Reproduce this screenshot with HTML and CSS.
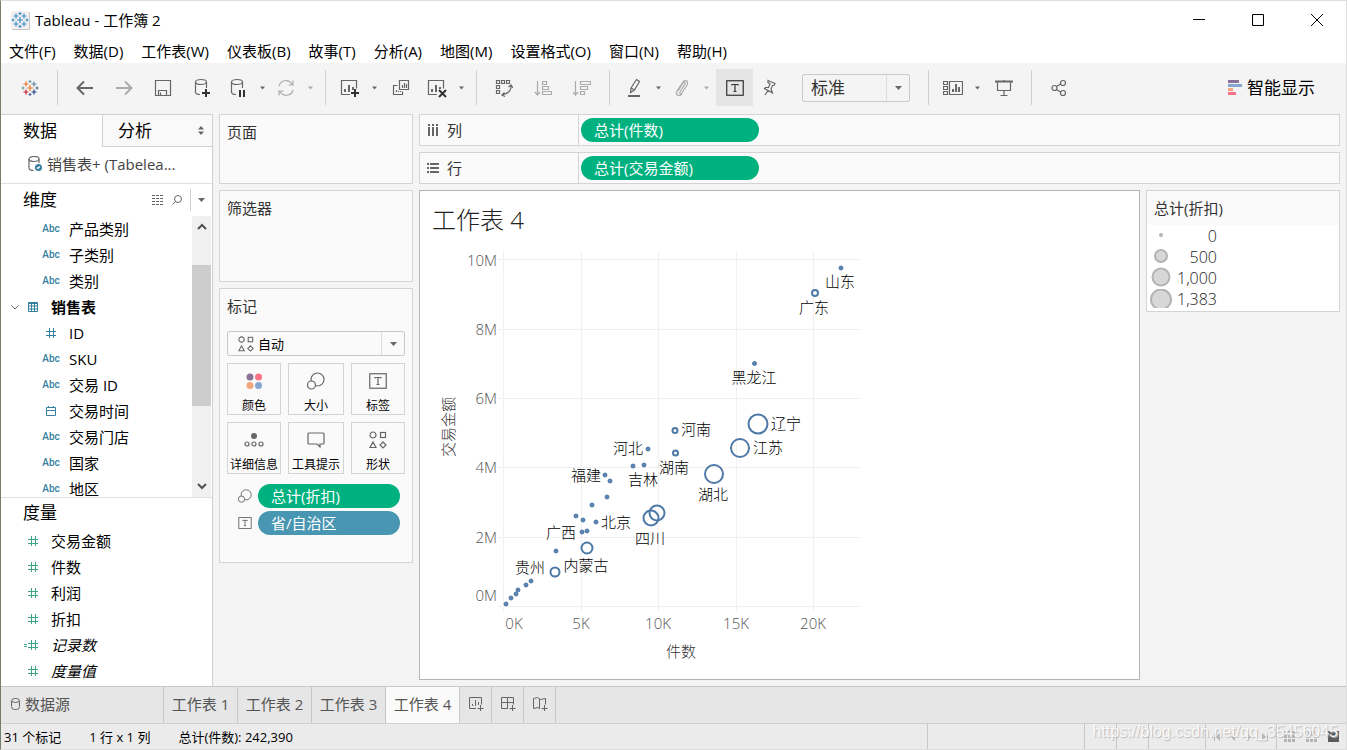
FILE: index.html
```
<!DOCTYPE html>
<html lang="zh-CN">
<head>
    <meta charset="UTF-8">
    <meta name="viewport" content="width=device-width, initial-scale=1.0">
    <title>Tableau - 工作簿 2</title>
    <link rel="stylesheet" href="styles.css">
</head>
<body>
    <svg class="sprite" aria-hidden="true">
        <symbol id="logo-parts" viewBox="0 0 18 18">
            <path d="M5 2.5v5M2.5 5h5M13 2.5v5M10.5 5h5M5 10.5v5M2.5 13h5M13 10.5v5M10.5 13h5M9 6v6M6 9h6M9 1v3M7.5 2.5h3M9 14v3M7.5 15.5h3M2 7.5v3M.5 9h3M16 7.5v3M14.5 9h3"/>
        </symbol>
        <symbol id="caret" viewBox="0 0 7 4"><path d="M0 0h7L3.5 4z"/></symbol>
        <symbol id="hash" viewBox="0 0 10 10"><path d="M3.5 0v10M7.5 0v10M0 3.5h10M0 7.5h10"/></symbol>
        <symbol id="size" viewBox="0 0 18 18"><circle cx="10.5" cy="7.5" r="6.5"/><circle cx="4.5" cy="13" r="4" class="paper"/></symbol>
        <symbol id="text" viewBox="0 0 18 16"><rect x=".75" y=".75" width="16.5" height="14.5"/><path d="M6 5.5V4.5h6v1M9 4.5v7M7.5 11.5h3"/></symbol>
        <symbol id="shapes" viewBox="0 0 18 18">
            <circle cx="4" cy="4" r="3"/><rect x="11.5" y="1.5" width="5" height="5"/><path d="M4 11l3 5.5H1zM14 11l3 3-3 3-3-3z"/>
        </symbol>
    </svg>

    <div class="window">
        <header class="title-bar">
            <svg class="app-icon" viewBox="0 0 18 18"><use href="#logo-parts"/></svg>
            <h1>Tableau - 工作簿 2</h1>
            <div class="window-buttons">
                <button aria-label="最小化"><svg width="12" height="12" viewBox="0 0 12 12"><path d="M0 5.5h12"/></svg></button>
                <button aria-label="最大化"><svg width="12" height="12" viewBox="0 0 12 12"><path d="M.5.5h11v11H.5z"/></svg></button>
                <button aria-label="关闭"><svg width="12" height="12" viewBox="0 0 12 12"><path d="M0 0l12 12M12 0L0 12"/></svg></button>
            </div>
        </header>

        <nav class="menu">
            <button>文件(F)</button>
            <button>数据(D)</button>
            <button>工作表(W)</button>
            <button>仪表板(B)</button>
            <button>故事(T)</button>
            <button>分析(A)</button>
            <button>地图(M)</button>
            <button>设置格式(O)</button>
            <button>窗口(N)</button>
            <button>帮助(H)</button>
        </nav>

        <div class="toolbar">
            <button class="tool" aria-label="开始页">
                <svg width="18" height="18" viewBox="0 0 18 18">
                    <path stroke="#e8762c" d="M9 6v6M6 9h6M5 2.5v5M2.5 5h5"/>
                    <path stroke="#5b879b" d="M13 2.5v5M10.5 5h5"/>
                    <path stroke="#c72035" d="M5 10.5v5M2.5 13h5"/>
                    <path stroke="#1f457e" d="M13 10.5v5M10.5 13h5"/>
                    <path stroke="#7199a6" d="M9 1v3M7.5 2.5h3M2 7.5v3M.5 9h3"/>
                    <path stroke="#5c6692" d="M9 14v3M7.5 15.5h3M16 7.5v3M14.5 9h3"/>
                </svg>
            </button>
            <span class="divider"></span>
            <button class="tool" aria-label="撤消"><svg width="18" height="16" viewBox="0 0 18 16"><path stroke-width="2" d="M17 8H2M8 1.5L1.5 8 8 14.5"/></svg></button>
            <button class="tool" aria-label="重做" disabled><svg width="18" height="16" viewBox="0 0 18 16"><path stroke-width="2" d="M1 8h15M10 1.5L16.5 8 10 14.5"/></svg></button>
            <button class="tool" aria-label="保存"><svg width="18" height="18" viewBox="0 0 18 18"><path d="M1.5 1.5h15v15h-15zM4.5 16.5v-5h8v5"/><path d="M6.5 13.5v3"/></svg></button>
            <button class="tool" aria-label="新建数据源"><svg width="18" height="20" viewBox="0 0 18 20"><ellipse cx="8" cy="4" rx="5.5" ry="2.5"/><path d="M2.5 4v10c0 1.5 2 2.5 4.5 2.5M13.5 4v6"/><path class="bold" d="M13 11v8M9 15h8"/></svg></button>
            <button class="tool split" aria-label="暂停自动更新"><svg width="18" height="20" viewBox="0 0 18 20"><ellipse cx="8" cy="4" rx="5.5" ry="2.5"/><path d="M2.5 4v10c0 1.5 2 2.5 4.5 2.5M13.5 4v6"/><path class="bold" d="M11 12v7M15 12v7"/></svg></button>
            <button class="drop" aria-label="自动更新选项"><svg><use href="#caret"/></svg></button>
            <button class="tool split" aria-label="运行更新" disabled><svg width="18" height="18" viewBox="0 0 18 18"><path d="M2 7a7 7 0 0 1 13-1.5M16 11a7 7 0 0 1-13 1.5M16 1.5v4.5h-4.5M2 16.5V12h4.5"/></svg></button>
            <button class="drop" aria-label="更新选项" disabled><svg><use href="#caret"/></svg></button>
            <span class="divider"></span>
            <button class="tool split" aria-label="新建工作表"><svg width="20" height="20" viewBox="0 0 20 20"><path d="M10 16.5H1.5v-14h15v8"/><path stroke-width="2" d="M5 14v-3M9 14V7M13 12V9"/><path class="bold" d="M15 11v8M11 15h8"/></svg></button>
            <button class="drop" aria-label="新建选项"><svg><use href="#caret"/></svg></button>
            <button class="tool" aria-label="复制工作表"><svg width="18" height="18" viewBox="0 0 18 18"><path d="M7.5 1.5h9v9h-9zM5.5 6.5h-4v9h9v-3M10.5 9V6M12.5 9V4M14.5 9V5M4.5 13v-2M6.5 13v-1M8.5 13v-1"/></svg></button>
            <button class="tool split" aria-label="清除工作表"><svg width="20" height="20" viewBox="0 0 20 20"><path d="M10 16.5H1.5v-14h15v8"/><path stroke-width="2" d="M5 14v-3M9 14V7M13 11V9"/><path class="bold" d="M12 12l7 7M19 12l-7 7"/></svg></button>
            <button class="drop" aria-label="清除选项"><svg><use href="#caret"/></svg></button>
            <span class="divider"></span>
            <button class="tool" aria-label="交换行和列"><svg width="18" height="18" viewBox="0 0 18 18"><path d="M1.5 1.5h3v3h-3zM6.5 1.5h3v3h-3zM11.5 1.5h3v3h-3zM1.5 6.5h3v3h-3zM1.5 11.5h3v3h-3z"/><path d="M16 6c1 5-3 9-9 10M13.5 8L16 6l2 3M9.5 13.5L7 16l3 1.5"/></svg></button>
            <button class="tool" aria-label="升序" disabled><svg width="18" height="16" viewBox="0 0 18 16"><path d="M3.5 1v14M1 12l2.5 3L6 12M8.5 1.5h4v3h-4zM8.5 6.5h6v3h-6zM8.5 11.5h9v3h-9z"/></svg></button>
            <button class="tool" aria-label="降序" disabled><svg width="18" height="16" viewBox="0 0 18 16"><path d="M2.5 1v14M0 12l2.5 3L5 12M7.5 1.5h10v3h-10zM7.5 6.5h7v3h-7zM7.5 11.5h4v3h-4z"/></svg></button>
            <span class="divider"></span>
            <button class="tool split" aria-label="突出显示"><svg width="14" height="20" viewBox="0 0 14 20"><path d="M4 10L9.5 1.5l3 2L7.5 12 3.5 14.5zM4 10l3.5 2"/><path stroke-width="2" d="M1 18h12"/></svg></button>
            <button class="drop" aria-label="突出显示选项"><svg><use href="#caret"/></svg></button>
            <button class="tool split" aria-label="组成员" disabled><svg width="14" height="18" viewBox="0 0 14 18"><path d="M10 5L5 13c-1 1.5 1 2.5 2 1L12 6c2-4-2-6-4-3L2 12c-2 4 2 6 5 3M10 5c1-1.5-1-2-2-1L3 12"/></svg></button>
            <button class="drop" aria-label="组选项" disabled><svg><use href="#caret"/></svg></button>
            <button class="tool pressed" aria-label="显示标记标签" aria-pressed="true"><svg width="18" height="16"><use href="#text"/></svg></button>
            <button class="tool split" aria-label="固定轴"><svg width="16" height="18" viewBox="0 0 16 18"><path d="M6 1.5l7 3-1 2h-1.5L9 10l1.500 4L2.500 9.500l1-1H6.500L8 5 6 3.500zM6 11.500L3 16"/></svg></button>
            <label class="picker fit">
                <select aria-label="适合"><option>标准</option><option>适合宽度</option></select>
                <span class="picker-arrow"><svg><use href="#caret"/></svg></span>
            </label>
            <span class="divider wide"></span>
            <button class="tool split" aria-label="显示/隐藏卡"><svg width="20" height="16" viewBox="0 0 20 16"><path d="M.5 1.5h4v3h-4zM.5 6.5h4v3h-4zM.5 11.5h4v3h-4zM6.5 1.5h13v13h-13z"/><path stroke-width="2" d="M10 12V9M13 12V4M16 12V7"/></svg></button>
            <button class="drop" aria-label="卡选项"><svg><use href="#caret"/></svg></button>
            <button class="tool" aria-label="演示模式"><svg width="18" height="18" viewBox="0 0 18 18"><path stroke-width="2" d="M0 2.500h18"/><path d="M2.5 3v8.500h13V3M9 1v1M9 12v4M5.500 16.500h7"/></svg></button>
            <span class="divider"></span>
            <button class="tool" aria-label="共享"><svg width="16" height="18" viewBox="0 0 16 18"><path d="M5.5 7.5L9.5 5M5.5 10.5L9.5 13"/><circle cx="3.5" cy="9" r="2.5"/><circle cx="12" cy="4" r="2.5"/><circle cx="12" cy="14" r="2.5"/></svg></button>
            <button class="show-me">
                <svg width="14" height="16" viewBox="0 0 14 16"><path fill="#8a7199" d="M0 0h11v3H0z"/><path fill="#85a7cf" d="M0 4h14v3H0z"/><path fill="#f4a67d" d="M0 8h5v3H0z"/><path fill="#fb7185" d="M0 12h8v3H0z"/></svg>
                智能显示
            </button>
        </div>

        <main class="workspace">
            <aside class="data-pane">
                <div class="pane-tabs">
                    <button class="pane-tab active">数据</button>
                    <button class="pane-tab">分析
                        <svg width="6" height="9" viewBox="0 0 6 9"><path d="M0 3.5L3 0l3 3.5zM0 5.5L3 9l3-3.5z"/></svg>
                    </button>
                </div>
                <div class="data-source">
                    <svg width="15" height="16" viewBox="0 0 15 16"><ellipse cx="6" cy="3" rx="5" ry="2.5"/><path d="M1 3v9c0 1.5 2 2.5 4.5 2.5M11 3v4"/><circle cx="10.5" cy="11.5" r="3.5" fill="#35809f" stroke="none"/><path stroke="#fff" d="M9 11.5l1 1 2-2"/></svg>
                    <span>销售表+ (Tabelea...</span>
                </div>
                <div class="pane-heading">
                    <h2>维度</h2>
                    <button aria-label="查看数据"><svg width="12" height="10" viewBox="0 0 12 10"><path stroke-dasharray="3 1" d="M0 .5h12M0 3.5h12M0 6.5h12M0 9.5h12"/></svg></button>
                    <button aria-label="查找字段"><svg width="10" height="10" viewBox="0 0 10 10"><circle cx="6" cy="4" r="3.5"/><path d="M3.5 6.5L.5 9.5"/></svg></button>
                    <button class="pane-menu" aria-label="维度菜单"><svg><use href="#caret"/></svg></button>
                </div>
                <div class="dimensions">
                    <ul class="fields">
                        <li class="child"><span class="abc">Abc</span>产品类别</li>
                        <li class="child"><span class="abc">Abc</span>子类别</li>
                        <li class="child"><span class="abc">Abc</span>类别</li>
                        <li class="folder">
                            <svg class="chevron" width="8" height="5" viewBox="0 0 8 5"><path d="M.5.5L4 4 7.5.5"/></svg>
                            <svg width="10" height="10" viewBox="0 0 10 10"><path d="M.5.5h9v9h-9zM0 1.5h10M0 4h10M0 7h10M3.5 1v9M6.5 1v9"/></svg>
                            <strong>销售表</strong>
                        </li>
                        <li class="child"><span class="abc"><svg width="10" height="10"><use href="#hash"/></svg></span>ID</li>
                        <li class="child"><span class="abc">Abc</span>SKU</li>
                        <li class="child"><span class="abc">Abc</span>交易 ID</li>
                        <li class="child"><span class="abc"><svg width="10" height="10" viewBox="0 0 10 10"><path d="M.5 1.5h9v8h-9zM0 4.5h10M2.5 0v2M7.5 0v2"/></svg></span>交易时间</li>
                        <li class="child"><span class="abc">Abc</span>交易门店</li>
                        <li class="child"><span class="abc">Abc</span>国家</li>
                        <li class="child"><span class="abc">Abc</span>地区</li>
                    </ul>
                    <div class="scrollbar">
                        <svg width="10" height="7" viewBox="0 0 10 7"><path d="M1 6l4-4 4 4"/></svg>
                        <div class="scroll-track"><div class="scroll-thumb"></div></div>
                        <svg width="10" height="7" viewBox="0 0 10 7"><path d="M1 1l4 4 4-4"/></svg>
                    </div>
                </div>
                <div class="measures">
                    <h2>度量</h2>
                    <ul class="fields">
                        <li><svg width="10" height="10"><use href="#hash"/></svg>交易金额</li>
                        <li><svg width="10" height="10"><use href="#hash"/></svg>件数</li>
                        <li><svg width="10" height="10"><use href="#hash"/></svg>利润</li>
                        <li><svg width="10" height="10"><use href="#hash"/></svg>折扣</li>
                        <li class="computed"><svg width="14" height="10" viewBox="0 0 14 10"><path d="M0 4.5h3M0 6.5h3M7.5 0v10M11.5 0v10M4 3.5h10M4 7.5h10"/></svg><em>记录数</em></li>
                        <li><svg width="10" height="10"><use href="#hash"/></svg><em>度量值</em></li>
                    </ul>
                </div>
            </aside>

            <div class="cards">
                <section class="card pages"><h3>页面</h3></section>
                <section class="card filters"><h3>筛选器</h3></section>
                <section class="card marks">
                    <h3>标记</h3>
                    <label class="picker mark-type">
                        <svg width="16" height="16"><use href="#shapes"/></svg>
                        <select aria-label="标记类型"><option>自动</option><option>形状</option></select>
                        <span class="picker-arrow"><svg><use href="#caret"/></svg></span>
                    </label>
                    <div class="mark-buttons">
                        <button><svg class="dots" width="18" height="18" viewBox="0 0 18 18"><circle cx="5" cy="5" r="3.5" fill="#8a7199"/><circle cx="13.5" cy="5" r="3.5" fill="#fb7185"/><circle cx="5" cy="13.5" r="3.5" fill="#f4a67d"/><circle cx="13.5" cy="13.5" r="3.5" fill="#85a7cf"/></svg>颜色</button>
                        <button><svg width="18" height="18"><use href="#size"/></svg>大小</button>
                        <button><svg width="18" height="18"><use href="#text"/></svg>标签</button>
                        <button><svg width="20" height="18" viewBox="0 0 20 18"><circle cx="10" cy="5" r="3" fill="#666" stroke="none"/><circle cx="3" cy="13" r="2"/><circle cx="10" cy="13" r="2"/><circle cx="17" cy="13" r="2"/></svg>详细信息</button>
                        <button><svg width="18" height="18" viewBox="0 0 18 18"><path d="M2 2h14q1 0 1 1v9q0 1-1 1h-3v3l-3-3H2q-1 0-1-1V3q0-1 1-1z"/></svg>工具提示</button>
                        <button><svg width="18" height="18"><use href="#shapes"/></svg>形状</button>
                    </div>
                    <div class="mark-fields">
                        <svg width="14" height="14"><use href="#size"/></svg>
                        <button class="pill green">总计(折扣)</button>
                        <svg width="14" height="12"><use href="#text"/></svg>
                        <button class="pill blue">省/自治区</button>
                    </div>
                </section>
            </div>

            <div class="canvas">
                <div class="shelf">
                    <div class="shelf-name"><svg width="12" height="12" viewBox="0 0 12 12"><path stroke-width="2" d="M2 0v2M6 0v2M10 0v2M2 3v9M6 3v9M10 3v9"/></svg>列</div>
                    <button class="pill green">总计(件数)</button>
                </div>
                <div class="shelf">
                    <div class="shelf-name"><svg width="12" height="12" viewBox="0 0 12 12"><path stroke-width="2" d="M0 2h2M0 6h2M0 10h2M3 2h9M3 6h9M3 10h9"/></svg>行</div>
                    <button class="pill green">总计(交易金额)</button>
                </div>
                <div class="view-row">
                    <section class="view">
                        <h2>工作表 4</h2>
                        <svg class="chart" width="450" height="430" viewBox="420 240 450 430" role="img" aria-label="交易金额 / 件数">
                            <g class="grid">
                                <path d="M498 259.5h362M498 329.5h362M498 398.5h362M498 467.5h362M498 537.5h362M498 606.5h362"/>
                                <path d="M503.5 251v360M581.5 251v360M658.5 251v360M736.5 251v360M813.5 251v360"/>
                            </g>
                            <g class="ticks y-ticks">
                                <text x="497" y="266">10M</text>
                                <text x="497" y="335">8M</text>
                                <text x="497" y="404">6M</text>
                                <text x="497" y="473">4M</text>
                                <text x="497" y="543">2M</text>
                                <text x="497" y="601">0M</text>
                            </g>
                            <g class="ticks">
                                <text x="514" y="629">0K</text>
                                <text x="581" y="629">5K</text>
                                <text x="658" y="629">10K</text>
                                <text x="736" y="629">15K</text>
                                <text x="813" y="629">20K</text>
                            </g>
                            <g class="axis-titles">
                                <text x="681" y="657">件数</text>
                                <text transform="translate(454 427) rotate(-90)">交易金额</text>
                            </g>
                            <g class="points">
                                <circle cx="506" cy="604" r="2"/>
                                <circle cx="511" cy="598" r="2"/>
                                <circle cx="516" cy="594" r="2"/>
                                <circle cx="518" cy="590" r="2"/>
                                <circle cx="526" cy="585" r="2"/>
                                <circle cx="531" cy="581" r="2"/>
                                <circle cx="556" cy="551" r="2"/>
                                <circle cx="576" cy="516" r="2"/>
                                <circle cx="583" cy="520" r="2"/>
                                <circle cx="592" cy="505" r="2"/>
                                <circle cx="607" cy="497" r="2"/>
                                <circle cx="596" cy="522" r="2"/>
                                <circle cx="587" cy="531" r="2"/>
                                <circle cx="582" cy="532" r="2"/>
                                <circle cx="605" cy="475" r="2"/>
                                <circle cx="610" cy="481" r="2"/>
                                <circle cx="633" cy="466" r="2"/>
                                <circle cx="644" cy="465" r="2"/>
                                <circle cx="648" cy="449" r="2"/>
                                <circle cx="754.5" cy="363.5" r="2"/>
                                <circle cx="841" cy="268" r="2"/>
                            </g>
                            <g class="rings">
                                <circle cx="675" cy="430.5" r="2.5"/>
                                <circle cx="675.5" cy="453" r="2.5"/>
                                <circle cx="815" cy="293" r="3"/>
                                <circle cx="555" cy="572" r="4.5"/>
                                <circle cx="587" cy="548" r="5.5"/>
                                <circle cx="651" cy="518" r="7.5"/>
                                <circle cx="657" cy="513" r="7.5"/>
                                <circle cx="714" cy="474" r="9"/>
                                <circle cx="740" cy="448" r="9"/>
                                <circle cx="758" cy="424" r="9.5"/>
                            </g>
                            <g class="labels">
                                <text x="840" y="287">山东</text>
                                <text x="814" y="313">广东</text>
                                <text x="754" y="383">黑龙江</text>
                                <text x="786" y="429">辽宁</text>
                                <text x="768" y="453">江苏</text>
                                <text x="696" y="435">河南</text>
                                <text x="628" y="454">河北</text>
                                <text x="674" y="473">湖南</text>
                                <text x="586" y="481">福建</text>
                                <text x="643" y="485">吉林</text>
                                <text x="713" y="500">湖北</text>
                                <text x="616" y="528">北京</text>
                                <text x="561" y="538">广西</text>
                                <text x="650" y="544">四川</text>
                                <text x="530" y="573">贵州</text>
                                <text x="586" y="571">内蒙古</text>
                            </g>
                        </svg>
                    </section>
                    <section class="legend">
                        <h3>总计(折扣)</h3>
                        <ul>
                            <li><svg width="22" height="21" viewBox="0 0 22 21"><circle cx="11" cy="10" r="1"/></svg><span>0</span></li>
                            <li><svg width="22" height="21" viewBox="0 0 22 21"><circle cx="11" cy="10" r="6"/></svg><span>500</span></li>
                            <li><svg width="22" height="21" viewBox="0 0 22 21"><circle cx="11" cy="10" r="8.5"/></svg><span>1,000</span></li>
                            <li><svg width="22" height="19" viewBox="0 0 22 19"><circle cx="11" cy="10.5" r="10"/></svg><span>1,383</span></li>
                        </ul>
                    </section>
                </div>
            </div>
        </main>

        <nav class="sheet-tabs">
            <button class="source-tab"><svg width="9" height="12" viewBox="0 0 9 12"><rect x=".5" y=".5" width="8" height="11" rx="3"/><path d="M.5 3.5q4 2 8 0"/></svg>数据源</button>
            <button class="sheet">工作表 1</button>
            <button class="sheet">工作表 2</button>
            <button class="sheet">工作表 3</button>
            <button class="sheet active">工作表 4</button>
            <button class="new-tab" aria-label="新建工作表"><svg width="16" height="16" viewBox="0 0 16 16"><path d="M8 12.5H1.5v-11h12v7M4.5 10V8M7.5 10V4M10.5 9V6M12.5 9v6M9.5 12.5h6"/></svg></button>
            <button class="new-tab" aria-label="新建仪表板"><svg width="16" height="16" viewBox="0 0 16 16"><path d="M8 12.5H1.5v-11h12v7M1.5 6.5h12M7.5 1.5v11M12.5 9v6M9.5 12.5h6"/></svg></button>
            <button class="new-tab" aria-label="新建故事"><svg width="16" height="16" viewBox="0 0 16 16"><path d="M8 13l-2-1.5-4.5 1V2.5l4-1 3 2 5-1v6M7.5 3v9M12.5 9v6M9.5 12.5h6"/></svg></button>
        </nav>

        <footer class="status">
            <span>31 个标记</span>
            <span>1 行 x 1 列</span>
            <span>总计(件数): 242,390</span>
            <div class="status-cells">
                <i class="cell-wide"></i>
                <i class="cell"></i>
                <i class="cell"></i>
                <i class="cell-mid"></i>
                <div class="pager">
                    <svg width="54" height="8" viewBox="0 0 54 8"><path d="M0 0h1v8H0zM6 0v8L2 4zM21 0v8l-4-4zM33 0v8l4-4zM48 0v8l4-4zM53 0h1v8h-1z"/></svg>
                </div>
                <div class="view-modes">
                    <svg width="11" height="11" viewBox="0 0 11 11"><path d="M0 0h3v3H0zM4 0h3v3H4zM8 0h3v3H8zM0 4h3v3H0zM4 4h3v3H4zM8 4h3v3H8zM0 8h3v3H0zM4 8h3v3H4zM8 8h3v3H8z"/></svg>
                    <svg width="11" height="11" viewBox="0 0 11 11"><path d="M2 0h7v5H2zM0 4h3v3H0zM8 4h3v3H8zM0 8h3v3H0zM4 8h3v3H4zM8 8h3v3H8z"/></svg>
                    <svg class="on" width="11" height="11" viewBox="0 0 11 11"><path d="M0 0h11v11H0z"/></svg>
                </div>
            </div>
            <span class="watermark">https://blog.csdn.net/qq_35456045</span>
        </footer>
    </div>
</body>
</html>
```
FILE: styles.css
```
* {
    box-sizing: border-box;
}

/* icon strokes are inherited from here */
body {
    margin: 0;
    color: #000;
    font-family: "Open Sans", "Noto Sans CJK SC", sans-serif;
    font-size: 15px;
    line-height: 20px;
    fill: none;
    stroke: #666;
    stroke-width: 1.2;
}

button, select {
    margin: 0;
    padding: 0;
    border: 0;
    background: none;
    color: inherit;
    font: inherit;
    white-space: nowrap;
}

h1, h2, h3, ul {
    margin: 0;
    padding: 0;
    font-size: 15px;
    font-weight: 400;
}

ul {
    list-style: none;
}

svg {
    flex: none;
}

.sprite {
    display: none;
}

.window {
    display: flex;
    flex-direction: column;
    height: 100vh;
    min-height: 640px;
    overflow: hidden;
    border: 1px solid #dedede;
    border-left-color: #75806c;
    background: #f4f4f4;
}

/* title and menu */
.title-bar {
    display: flex;
    align-items: center;
    height: 37px;
    padding-left: 10px;
    background: #fff;
}

.app-icon {
    width: 18px;
    height: 18px;
    margin-right: 6px;
    background: #f1f1f1;
    box-shadow: 1px 1px 0 #c5c5c5;
    stroke: #3e8dc0;
}

.window-buttons {
    display: flex;
    margin-left: auto;
}

.window-buttons button {
    width: 59px;
    height: 36px;
}

.window-buttons svg {
    stroke: #000;
    stroke-width: 1;
}

.menu {
    display: flex;
    gap: 18px;
    height: 25px;
    padding: 0 8px;
    background: #fff;
}

/* toolbar */
.toolbar {
    display: flex;
    align-items: center;
    height: 51px;
    padding: 0 31px 2px 9px;
}

.tool, .drop {
    display: flex;
    flex: none;
    align-items: center;
    justify-content: center;
    width: 39px;
    height: 37px;
}

.tool.split {
    width: 34px;
}

.drop {
    width: 14px;
}

.drop svg, .picker-arrow svg, .pane-menu svg {
    width: 7px;
    height: 4px;
    fill: #666;
    stroke: none;
}

.drop svg {
    width: 5px;
}

.tool:disabled, .drop:disabled {
    opacity: .5;
}

.tool .bold {
    stroke: #333;
    stroke-width: 2;
}

.tool.pressed {
    width: 37px;
    margin-left: 3px;
    background: #e5e5e5;
}

.pressed svg {
    stroke: #333;
}

.divider {
    flex: none;
    width: 1px;
    height: 35px;
    margin: 0 7px 0 8px;
    background: #d0d0d0;
}

.divider.wide {
    margin-left: 18px;
}

.picker {
    display: flex;
    align-items: center;
    border: 1px solid #c9c9c9;
    border-radius: 2px;
}

.picker select {
    flex: 1;
    min-width: 0;
    height: 100%;
    appearance: none;
    outline: 0;
}

.picker-arrow {
    display: flex;
    align-items: center;
    justify-content: center;
    width: 23px;
    height: 100%;
    border-left: 1px solid #dcdcdc;
    pointer-events: none;
}

.fit {
    width: 108px;
    height: 28px;
    margin-left: 15px;
    color: #333;
    font-size: 17px;
}

.fit select {
    padding-left: 8px;
}

.show-me {
    display: flex;
    align-items: center;
    gap: 5px;
    margin-left: auto;
    font-size: 17px;
}

.show-me svg, .dots {
    stroke: none;
}

/* data pane */
.workspace {
    display: flex;
    flex: 1;
    gap: 6px;
    min-height: 0;
    padding-right: 6px;
}

.data-pane {
    display: flex;
    flex: none;
    flex-direction: column;
    width: 212px;
    border-top: 1px solid #d0d0d0;
    border-right: 1px solid #d0d0d0;
    background: #fff;
}

.pane-tabs {
    display: flex;
    height: 32px;
    font-size: 17px;
}

.pane-tab {
    display: flex;
    flex: 1;
    align-items: center;
    justify-content: space-between;
    padding: 0 8px 0 15px;
    border-bottom: 1px solid #d0d0d0;
    border-left: 1px solid #d0d0d0;
    background: #f9f9f9;
}

.pane-tab.active {
    flex: none;
    width: 101px;
    padding-left: 22px;
    border: 0;
    background: #fff;
}

.pane-tab svg {
    fill: #666;
    stroke: none;
}

.data-source {
    display: flex;
    align-items: center;
    gap: 4px;
    height: 37px;
    padding: 0 0 2px 27px;
    border-bottom: 1px solid #e0e0e0;
    color: #444;
}

.pane-heading {
    display: flex;
    align-items: center;
    height: 32px;
    padding-left: 22px;
}

.pane-heading h2, .measures h2 {
    font-size: 17px;
}

.pane-heading h2 {
    flex: 1;
}

.pane-heading button {
    display: flex;
    align-items: center;
    justify-content: center;
    width: 19px;
    height: 22px;
}

.pane-heading .pane-menu {
    width: 22px;
    margin-left: 4px;
    border-left: 1px solid #d0d0d0;
}

.pane-heading svg {
    stroke-width: 1;
}

.dimensions {
    display: flex;
    flex: 1;
    min-height: 0;
    overflow: hidden;
    border-bottom: 1px solid #e0e0e0;
}

.dimensions .fields {
    flex: 1;
}

.fields li {
    display: flex;
    align-items: center;
    gap: 13px;
    height: 26px;
    padding-left: 27px;
}

.fields .child {
    gap: 9px;
    padding-left: 41px;
}

.fields .folder {
    padding-left: 10px;
}

.folder .chevron {
    margin-right: -4px;
}

.fields .computed {
    padding-left: 23px;
}

.fields svg {
    stroke: #35809f;
    stroke-width: 1;
}

.measures .fields svg {
    stroke: #3ba486;
}

.fields .chevron {
    stroke: #666;
}

.abc {
    display: flex;
    align-items: center;
    justify-content: center;
    width: 18px;
    color: #35809f;
    font-family: "Roboto", sans-serif;
    font-size: 10px;
    font-weight: 500;
}

.scrollbar {
    display: flex;
    flex-direction: column;
    align-items: center;
    justify-content: space-between;
    width: 20px;
    padding: 7px 0;
    border-right: 1px solid #fff;
    background: #f0f0f0;
}

.scrollbar svg {
    stroke: #505050;
    stroke-width: 2;
}

.scroll-track {
    flex: 1;
    width: 100%;
    padding: 35px 0 65px;
}

.scroll-thumb {
    height: 92%;
    background: #cdcdcd;
}

.measures {
    padding-bottom: 2px;
}

.measures h2 {
    padding-left: 22px;
    line-height: 30px;
}

/* cards */
.cards {
    display: flex;
    flex: none;
    flex-direction: column;
    gap: 6px;
    width: 194px;
}

.card {
    padding: 7px;
    border: 1px solid #d4d4d4;
    background: #fafafa;
}

.card h3, .legend h3 {
    color: #333;
}

.pages {
    min-height: 70px;
}

.filters {
    min-height: 92px;
}

.marks {
    min-height: 275px;
}

.mark-type {
    height: 25px;
    margin: 15px 0 7px;
    padding-left: 10px;
    font-size: 13px;
}

.mark-type select {
    padding-left: 4px;
}

.mark-buttons {
    display: grid;
    grid-template-columns: 54px 1fr 54px;
    gap: 7px;
}

.mark-buttons button {
    display: flex;
    flex-direction: column;
    align-items: center;
    justify-content: space-between;
    height: 52px;
    padding-top: 8px;
    border: 1px solid #d4d4d4;
    font-size: 12px;
    line-height: 17px;
}

.paper {
    fill: #fafafa;
}

.mark-fields {
    display: grid;
    grid-template-columns: 14px 142px;
    gap: 3px 6px;
    align-items: center;
    padding: 10px 0 0 11px;
}

.pill {
    height: 24px;
    padding: 0 13px;
    border-radius: 12px;
    color: #fff;
    text-align: left;
}

.green {
    background: #00b180;
}

.blue {
    background: #4996b2;
}

/* shelves and sheet */
.canvas {
    display: flex;
    flex: 1;
    flex-direction: column;
    gap: 6px;
    min-width: 0;
    padding-bottom: 6px;
}

.shelf {
    display: flex;
    align-items: center;
    gap: 2px;
    height: 32px;
    border: 1px solid #d4d4d4;
    background: #fafafa;
}

.shelf-name {
    display: flex;
    align-items: center;
    gap: 8px;
    width: 159px;
    height: 100%;
    padding-left: 7px;
    border-right: 1px solid #d4d4d4;
    color: #333;
}

.shelf .pill {
    width: 178px;
}

.view-row {
    display: flex;
    flex: 1;
    gap: 6px;
    align-items: flex-start;
    min-height: 0;
}

.view {
    flex: 1;
    align-self: stretch;
    overflow: hidden;
    border: 1px solid #b4b4b4;
    background: #fff;
}

.view h2 {
    height: 49px;
    padding-left: 12px;
    color: #222;
    font-size: 24px;
    font-weight: 300;
    line-height: 57px;
}

.chart {
    display: block;
}

.chart text {
    stroke: none;
    text-anchor: middle;
    font-size: 15px;
}

.grid {
    stroke: #f0f0f0;
    stroke-width: 1;
}

.ticks {
    fill: #555;
    font-weight: 300;
}

.chart .y-ticks text {
    text-anchor: end;
}

.axis-titles {
    fill: #333;
    font-weight: 300;
}

.points {
    fill: #5b84b1;
    stroke: #4e79a7;
    stroke-width: 1;
}

.rings {
    stroke: #4e79a7;
    stroke-width: 2;
}

.labels {
    fill: #000;
    font-weight: 300;
}

.legend {
    width: 194px;
    padding-bottom: 2px;
    border: 1px solid #d4d4d4;
    background: #fff;
}

.legend h3 {
    padding: 7px;
    background: #fafafa;
}

.legend li {
    display: flex;
    align-items: center;
    height: 21px;
    padding-left: 3px;
}

.legend li span {
    width: 45px;
    color: #222;
    font-size: 16px;
    font-weight: 300;
    text-align: right;
}

.legend circle {
    fill: #d7d7d7;
    stroke: #b4b4b4;
    stroke-width: 2;
}

/* sheet tabs and status */
.sheet-tabs {
    display: flex;
    height: 38px;
    border-top: 1px solid #c8c8c8;
    border-bottom: 1px solid #d0d0d0;
    background: #e6e6e6;
    color: #555;
}

.sheet-tabs button {
    display: flex;
    align-items: center;
    justify-content: center;
    width: 74px;
    padding-bottom: 2px;
    border-right: 1px solid #c8c8c8;
}

.sheet-tabs .source-tab {
    justify-content: flex-start;
    gap: 5px;
    width: 163px;
    padding-left: 10px;
}

.sheet-tabs .new-tab {
    width: 32px;
}

.sheet-tabs .active {
    background: #fafafa;
}

.sheet-tabs svg {
    stroke-width: 1;
}

.status {
    display: flex;
    position: relative;
    align-items: center;
    gap: 28px;
    height: 25px;
    padding-left: 3px;
    background: #ebebeb;
    font-size: 13px;
}

.status-cells {
    display: flex;
    align-self: stretch;
    margin-left: auto;
}

.status-cells > * {
    display: flex;
    align-items: center;
    justify-content: center;
    border-left: 1px solid #c8c8c8;
}

.status svg {
    fill: #b4b4b4;
    stroke: none;
}

.status .on {
    fill: #5c5c5c;
}

.cell-wide {
    width: 157px;
}

.cell {
    width: 32px;
}

.cell-mid {
    width: 57px;
}

.pager {
    width: 71px;
}

.status-cells .view-modes {
    gap: 11px;
    width: 70px;
}

.watermark {
    position: absolute;
    right: 8px;
    bottom: 7px;
    color: #f8f8f8;
    font-family: "Liberation Sans", sans-serif;
    font-size: 16px;
    text-shadow: 1px 1px 1px #bbb;
}
```
